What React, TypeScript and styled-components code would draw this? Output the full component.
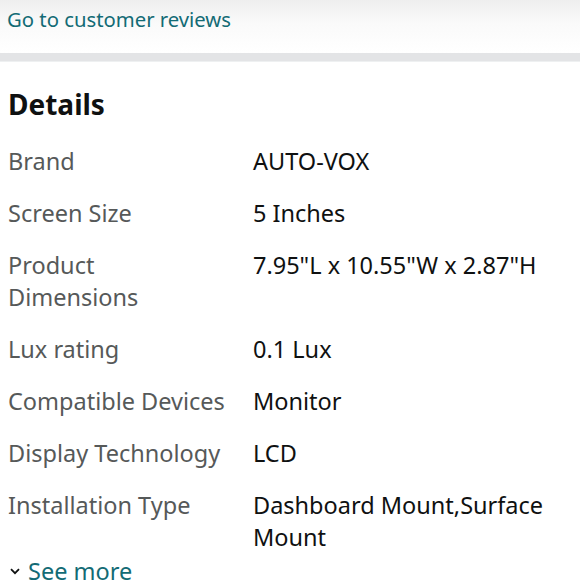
import React from "react";
import styled, { createGlobalStyle } from "styled-components";

const Global = createGlobalStyle`
  html, body { margin: 0; padding: 0; background: #fff; }
  body { font-family: "Noto Sans", "Open Sans", sans-serif; }
`;

const Page = styled.div`
  width: 580px;
  height: 580px;
  overflow: hidden;
  display: flex;
  flex-direction: column;
  & > * { flex-shrink: 0; }
`;

const TopBar = styled.div`
  height: 53px;
  background: linear-gradient(#eeeeee 0%, #fafafa 45%, #ffffff 100%);
  display: flex;
  align-items: flex-start;
  padding-left: 7px;
  box-sizing: border-box;
`;

const Link = styled.a`
  color: #136b75;
  font-size: 20.3px;
  line-height: 39px;
  text-decoration: none;
`;

const Divider = styled.div`
  height: 8px;
  background: #e3e4e6;
  border-bottom: 1px solid #eef0f1;
`;

const Section = styled.section`
  padding: 26px 0 0 8px;
  display: flex;
  flex-direction: column;
`;

const Title = styled.h2`
  margin: 0 0 25px 0;
  font-size: 28px;
  font-weight: 700;
  line-height: 32px;
  color: #0f1111;
`;

const Table = styled.div`
  display: grid;
  grid-template-columns: 245px 1fr;
  row-gap: 20px;
  font-size: 23.5px;
  line-height: 32px;
`;

const Label = styled.div`
  color: #565959;
  padding-right: 24px;
`;

const Value = styled.div`
  color: #0f1111;
  padding-right: 20px;
`;

const SeeMore = styled.div`
  display: flex;
  align-items: center;
  gap: 8px;
  margin-top: 2px;
  padding-left: 2px;
  color: #136b75;
  font-size: 23.5px;
  line-height: 32px;
`;

const rows: [string, string][] = [
  ["Brand", "AUTO-VOX"],
  ["Screen Size", "5 Inches"],
  ["Product Dimensions", '7.95"L x 10.55"W x 2.87"H'],
  ["Lux rating", "0.1 Lux"],
  ["Compatible Devices", "Monitor"],
  ["Display Technology", "LCD"],
  ["Installation Type", "Dashboard Mount,Surface Mount"],
];

export default function App() {
  return (
    <Page>
      <Global />
      <TopBar>
        <Link href="#">Go to customer reviews</Link>
      </TopBar>
      <Divider />
      <Section>
        <Title>Details</Title>
        <Table>
          {rows.map(([k, v]) => (
            <React.Fragment key={k}>
              <Label>{k}</Label>
              <Value>{v}</Value>
            </React.Fragment>
          ))}
        </Table>
        <SeeMore>
          <svg width="10" height="7" viewBox="0 0 10 7">
            <path d="M1 1.2 L5 5.2 L9 1.2" fill="none" stroke="#0f1111" strokeWidth="1.8" />
          </svg>
          <span>See more</span>
        </SeeMore>
      </Section>
    </Page>
  );
}
